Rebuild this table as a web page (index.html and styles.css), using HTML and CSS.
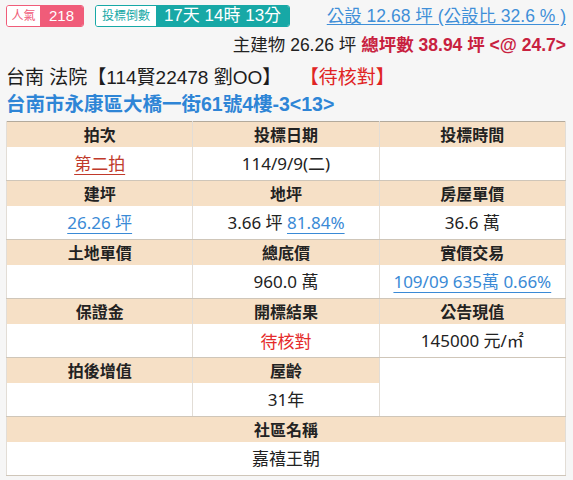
FILE: index.html
```html
<!DOCTYPE html>
<html lang="zh-Hant">
<head>
<meta charset="utf-8">
<link rel="stylesheet" href="styles.css">
</head>
<body>
<div class="page">
  <div class="topbar">
    <div class="badges">
      <span class="badge badge-pink"><span class="b-label">人氣</span><span class="b-val">218</span></span>
      <span class="badge badge-teal"><span class="b-label">投標倒數</span><span class="b-val">17天 14時 13分</span></span>
    </div>
    <a class="public-link" href="#">公設 12.68 坪 (公設比 32.6 % )</a>
  </div>
  <div class="sub">主建物 26.26 坪 <b class="total">總坪數 38.94 坪 &lt;@ 24.7&gt;</b></div>
  <div class="title">台南 法院【114賢22478 劉OO】<span class="status">【待核對】</span></div>
  <div class="addr">台南市永康區大橋一街61號4樓-3&lt;13&gt;</div>

  <table class="info">
    <tr class="hd"><th>拍次</th><th>投標日期</th><th>投標時間</th></tr>
    <tr class="dt"><td><a class="red-link" href="#">第二拍</a></td><td>114/9/9(二)</td><td></td></tr>
    <tr class="hd"><th>建坪</th><th>地坪</th><th>房屋單價</th></tr>
    <tr class="dt"><td><a class="blue-link" href="#">26.26 坪</a></td><td>3.66 坪 <a class="blue-link" href="#">81.84%</a></td><td>36.6 萬</td></tr>
    <tr class="hd"><th>土地單價</th><th>總底價</th><th>實價交易</th></tr>
    <tr class="dt"><td></td><td>960.0 萬</td><td><a class="blue-link" href="#">109/09 635萬 0.66%</a></td></tr>
    <tr class="hd"><th>保證金</th><th>開標結果</th><th>公告現值</th></tr>
    <tr class="dt"><td></td><td class="pending">待核對</td><td>145000 元/㎡</td></tr>
    <tr class="hd"><th>拍後增值</th><th>屋齡</th><td class="blank" rowspan="2"></td></tr>
    <tr class="dt"><td></td><td>31年</td></tr>
    <tr class="hd"><th colspan="3">社區名稱</th></tr>
    <tr class="dt last"><td colspan="3">嘉禧王朝</td></tr>
  </table>
</div>
</body>
</html>
```

FILE: styles.css
```css
html, body {
  margin: 0;
  padding: 0;
  background: #f6f6f6;
}
body {
  font-family: "Liberation Sans", "Noto Sans CJK TC", sans-serif;
  color: #222;
}
.page {
  padding: 5px 7px 0 6px;
}
.topbar {
  display: flex;
  justify-content: space-between;
  align-items: center;
  height: 22px;
}
.badges {
  display: flex;
  gap: 11px;
}
.badge {
  display: inline-flex;
  height: 22px;
  box-sizing: border-box;
  border: 1px solid;
  border-radius: 3px;
  overflow: hidden;
  line-height: 20px;
}
.b-label {
  background: #fff;
  font-size: 12px;
  text-align: center;
  white-space: nowrap;
}
.b-val {
  color: #fff;
  font-size: 15px;
  text-align: center;
  white-space: nowrap;
}
.badge-pink { border-color: #f05c79; }
.badge-pink .b-label { color: #f05c79; width: 33px; }
.badge-pink .b-val { background: #f05c79; width: 43px; }
.badge-teal { border-color: #17a8a6; }
.badge-teal .b-label { color: #17a8a6; width: 60px; }
.badge-teal .b-val { background: #17a8a6; font-size: 17px; width: 133px; }
.public-link {
  color: #3f8fd8;
  font-size: 17.5px;
  text-decoration: underline;
  text-underline-offset: 2px;
  line-height: 22px;
}
.sub {
  margin-top: 7px;
  text-align: right;
  font-size: 17.5px;
  line-height: 22px;
  color: #222;
}
.total {
  color: #c8213f;
}
.title {
  margin-top: 9px;
  font-size: 19px;
  line-height: 26px;
  color: #1c1c1c;
}
.status {
  color: #e02424;
  margin-left: 28px;
}
.addr {
  margin-top: 2px;
  font-size: 19.5px;
  line-height: 22px;
  font-weight: bold;
  color: #2e85d6;
}
.info {
  margin-top: 6px;
  width: 560px;
  border-collapse: collapse;
  table-layout: fixed;
  border: 1px solid #b3aa9c;
  font-family: "Noto Sans", "Noto Sans CJK TC", sans-serif;
  color: #222;
}
.info th, .info td {
  border-left: 1px solid #e2ddd6;
  border-right: 1px solid #e2ddd6;
  text-align: center;
  padding: 0;
}
.hd th {
  background: #f6e0c6;
  height: 25px;
  font-size: 16px;
  font-weight: bold;
  line-height: 25px;
  font-family: "Noto Sans CJK TC", sans-serif;
}
.dt td {
  background: #fff;
  height: 33px;
  font-size: 17px;
  line-height: 33px;
  border-bottom: 1px solid #cfc6b9;
}
.info td.blank {
  background: #fff;
  border-bottom: 1px solid #cfc6b9;
}
.red-link {
  color: #c0392b;
  text-decoration: underline;
  text-underline-offset: 4px;
}
.blue-link {
  color: #3a8ad6;
  text-decoration: underline;
  text-underline-offset: 4px;
}
.pending {
  color: #e52b2b;
  font-family: "Noto Sans CJK TC", sans-serif;
}
```
